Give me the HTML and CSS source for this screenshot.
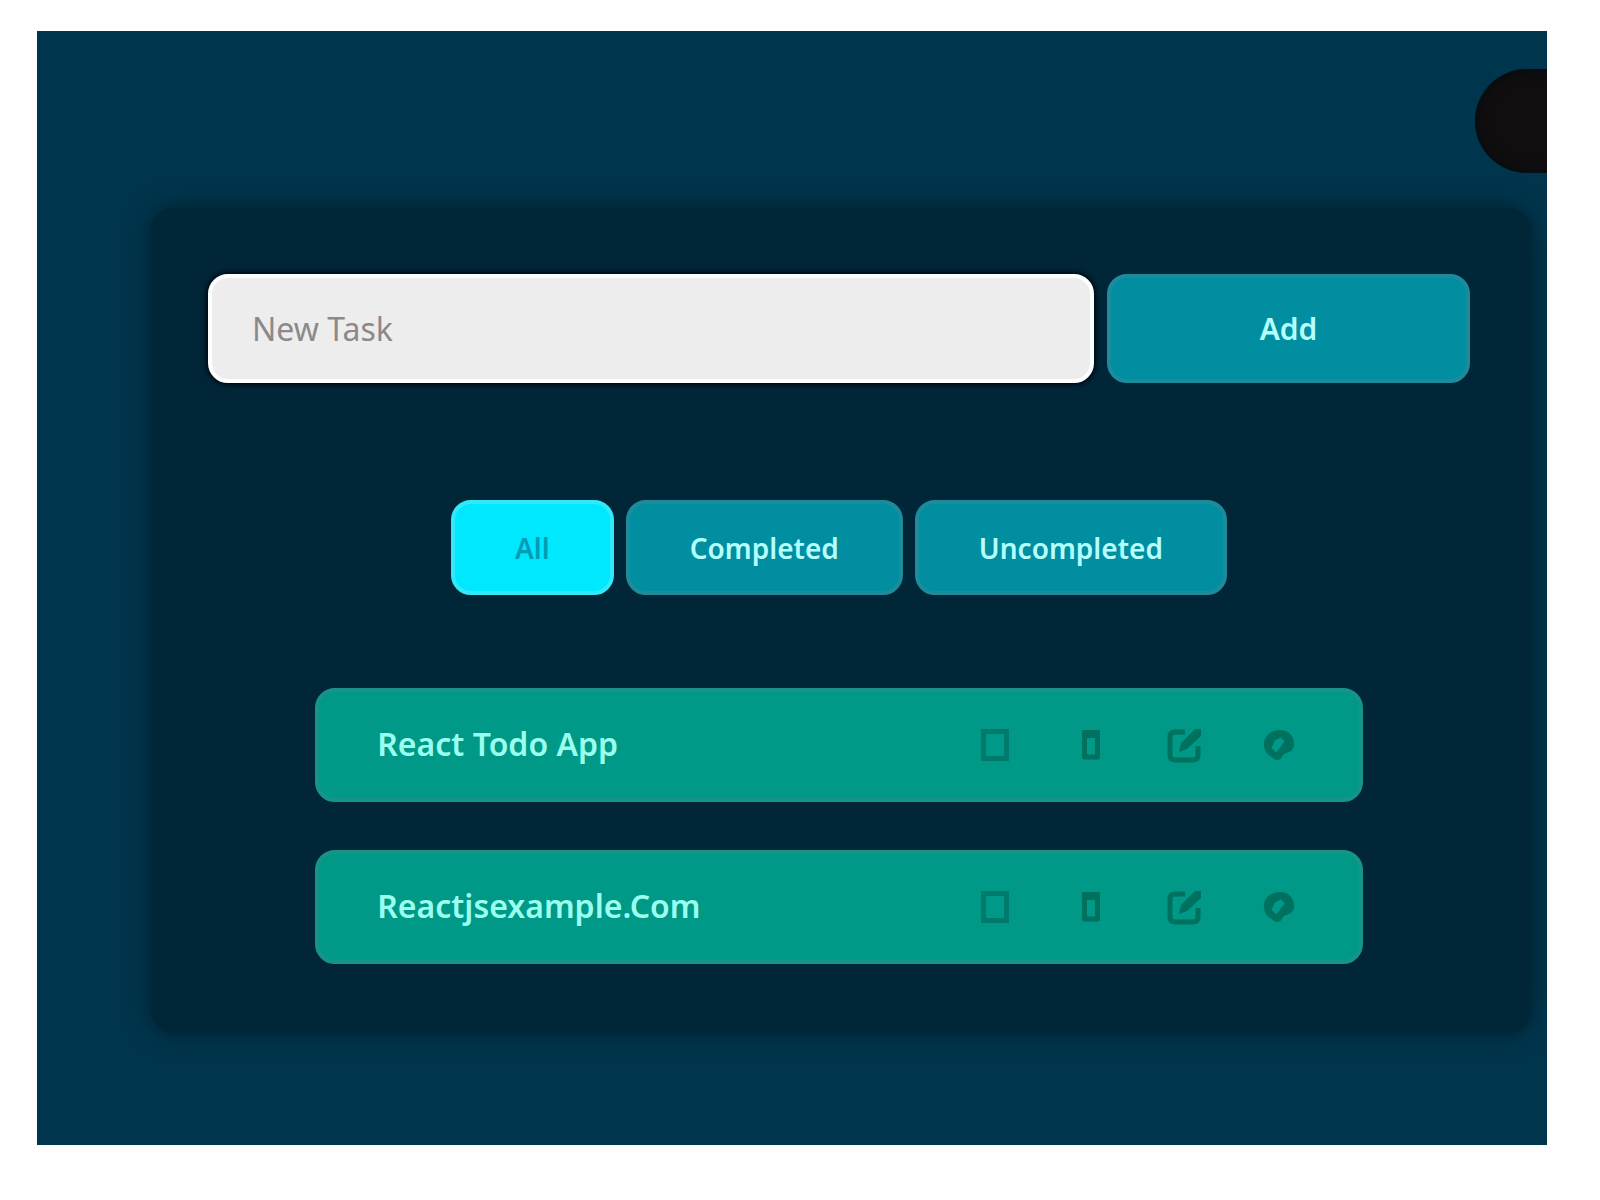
FILE: index.html
```html
<!DOCTYPE html>
<html lang="en">
<head>
<meta charset="utf-8">
<meta name="viewport" content="width=device-width, initial-scale=1">
<title>Todo App</title>
<link rel="stylesheet" href="styles.css">
</head>
<body>
<svg class="sprite" aria-hidden="true">
  <symbol id="trash" viewBox="0 0 36 36">
    <path d="M9 3h18v8H9z" fill="currentColor"/>
    <path d="M11.500 10v20h13V10" fill="none" stroke="currentColor" stroke-width="5" stroke-linejoin="round"/>
  </symbol>
  <symbol id="edit" viewBox="0 0 36 36">
    <path d="M18 5H8Q3 5 3 10v18q0 5 5 5h18q5 0 5-5V19" fill="none" stroke="currentColor" stroke-width="5"/>
    <path d="M12 25l2-9L28 2h6v7L20 22z" fill="currentColor"/>
  </symbol>
  <symbol id="palette" viewBox="0 0 36 36">
    <path fill="currentColor" fill-rule="evenodd" d="M19 2C10 2 2 8 2 17c0 7 4 12 9 14 2 4 8 4 10 0 1-3 3-4 6-5 4-1 7-4 7-9C34 8 28 2 19 2zM20 10l4 4-9 12-5-5 4-8z"/>
  </symbol>
</svg>
<main class="app">
  <button class="theme" type="button" aria-label="Toggle theme"></button>
  <section class="card">
    <form class="new-task">
      <input class="field" type="text" placeholder="New Task" aria-label="New Task">
      <button class="btn add" type="button">Add</button>
    </form>
    <nav class="filters">
      <button class="btn active" type="button">All</button>
      <button class="btn" type="button">Completed</button>
      <button class="btn" type="button">Uncompleted</button>
    </nav>
    <ul class="tasks">
      <li class="task">
        <label class="title" for="task-1">React Todo App</label>
        <input class="check" type="checkbox" id="task-1">
        <button class="icon" type="button" aria-label="Delete"><svg><use href="#trash"/></svg></button>
        <button class="icon" type="button" aria-label="Edit"><svg><use href="#edit"/></svg></button>
        <button class="icon" type="button" aria-label="Color"><svg class="small"><use href="#palette"/></svg></button>
      </li>
      <li class="task">
        <label class="title" for="task-2">Reactjsexample.Com</label>
        <input class="check" type="checkbox" id="task-2">
        <button class="icon" type="button" aria-label="Delete"><svg><use href="#trash"/></svg></button>
        <button class="icon" type="button" aria-label="Edit"><svg><use href="#edit"/></svg></button>
        <button class="icon" type="button" aria-label="Color"><svg class="small"><use href="#palette"/></svg></button>
      </li>
    </ul>
  </section>
</main>
</body>
</html>
```
FILE: styles.css
```css
* { box-sizing: border-box; }
body {
  margin: 0;
  padding: 31px 53px 55px 37px;
  background: #fff;
  font-family: "Noto Sans", "Open Sans", sans-serif;
}
.sprite { display: none; }
.app {
  position: relative;
  overflow: hidden;
  padding: 177px 16px 112px 114px;
  background: #00364d;
}
.theme {
  position: absolute;
  top: 38px;
  right: -52px;
  width: 124px;
  height: 104px;
  border: 0;
  border-radius: 52px;
  background: #110e10;
  box-shadow: inset 0 0 12px #000b10;
}
.card {
  padding: 66px 61px 69px 57px;
  border-radius: 24px;
  background: #002637;
  box-shadow: 0 0 8px #002637, 0 0 32px #002637;
}
.new-task {
  display: grid;
  grid-template-columns: 886fr 363fr;
  gap: 13px;
}
.field, .btn {
  border-radius: 20px;
  font-family: inherit;
}
.field {
  min-width: 0;
  height: 109px;
  padding: 0 40px;
  border: 4px solid #fbffff;
  background: #eeedee;
  box-shadow: 0 0 4px 2px #000713;
  color: #555;
  font-size: 32px;
}
.field::placeholder { color: #8b8989; opacity: 1; }
.btn {
  height: 95px;
  padding: 0 60px;
  border: 4px solid #1c8c9d;
  background: #008ea0;
  color: #b5ffff;
  font-size: 28px;
  font-weight: 600;
}
.add { height: 109px; font-size: 30px; }
.active {
  border-color: #31e9fa;
  background: #00e8fd;
  color: #009db4;
}
.filters {
  display: flex;
  justify-content: center;
  gap: 12px;
  margin-top: 117px;
}
.tasks {
  display: grid;
  gap: 48px;
  width: 83%;
  margin: 93px auto 0;
  padding: 0;
  list-style: none;
}
.task {
  display: flex;
  align-items: center;
  gap: 58px;
  height: 114px;
  padding: 0 62px 0 58px;
  border: 4px solid #169487;
  border-radius: 20px;
  background: #009887;
  color: #9bffee;
}
.title {
  flex: 1;
  padding-bottom: 4px;
  font-size: 32px;
  font-weight: 600;
}
.check, .icon {
  flex: none;
  width: 36px;
  height: 36px;
  margin: 0;
  color: #00705f;
}
.check {
  appearance: none;
  width: 28px;
  height: 32px;
  margin: 0 6px 0 2px;
  border: 5px solid #007b6b;
}
.icon {
  display: grid;
  place-items: center;
  padding: 0;
  border: 0;
  background: none;
}
.icon svg { width: 36px; height: 36px; }
.icon .small { width: 34px; height: 34px; }
```
